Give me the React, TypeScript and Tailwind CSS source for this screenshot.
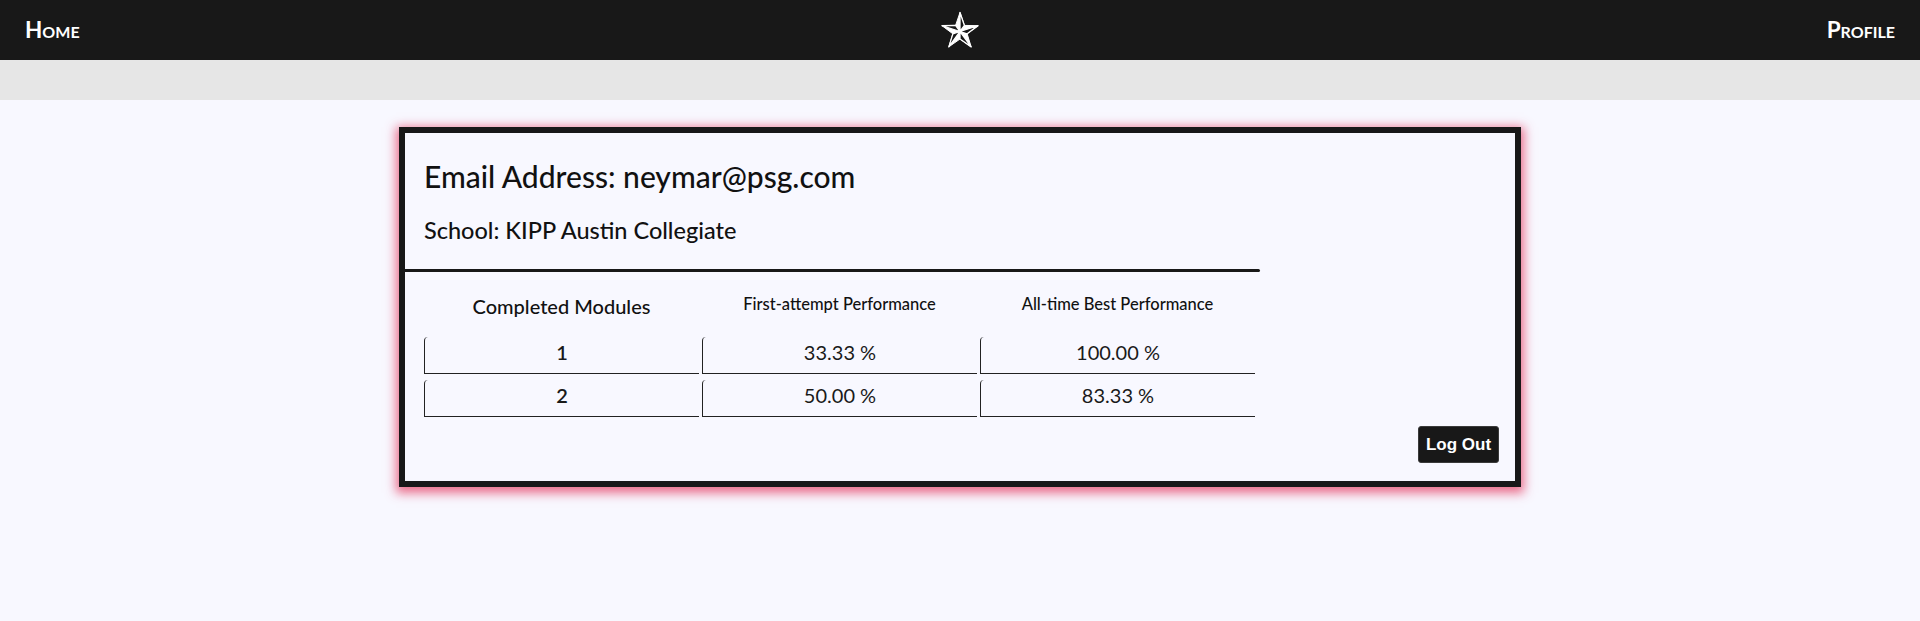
import React from "react";

const C = { x: 20, y: 20.5 };
const R = 19;
const r = 7.5;
function pt(rad: number, deg: number): [number, number] {
  const a = (deg * Math.PI) / 180;
  return [C.x + rad * Math.cos(a), C.y + rad * Math.sin(a)];
}

function NauticalStar() {
  const outer = [0, 1, 2, 3, 4].map((i) => pt(R, -90 + i * 72));
  const inner = [0, 1, 2, 3, 4].map((i) => pt(r, -54 + i * 72));
  const starPts: string[] = [];
  for (let i = 0; i < 5; i++) {
    starPts.push(outer[i].join(","));
    starPts.push(inner[i].join(","));
  }
  return (
    <svg width="40" height="40" viewBox="0 0 40 40">
      <polygon points={starPts.join(" ")} fill="#ffffff" stroke="#ffffff" strokeWidth="1" strokeLinejoin="round" />
      {[0, 1, 2, 3, 4].map((i) => {
        const o = outer[i];
        const n = inner[i];
        return (
          <polygon
            key={i}
            points={`${C.x},${C.y} ${o[0]},${o[1]} ${n[0]},${n[1]}`}
            fill="#181818"
            stroke="#ffffff"
            strokeWidth="1.3"
            strokeLinejoin="round"
          />
        );
      })}
    </svg>
  );
}

const rows = [
  { m: "1", first: "33.33 %", best: "100.00 %" },
  { m: "2", first: "50.00 %", best: "83.33 %" },
];

function Cell({ children, bold }: { children: React.ReactNode; bold?: boolean }) {
  return (
    <div
      className={`w-[275px] h-[37px] border-l border-b border-[#222222] rounded-tl-[4px] flex justify-center pt-[3px] text-[20px] leading-[24px] text-[#1a1a1a] ${
        bold ? "font-semibold" : "font-normal"
      }`}
    >
      {children}
    </div>
  );
}

export default function App() {
  return (
    <div className="min-h-[621px] bg-[#f8f8ff] font-['Lato','Liberation_Sans',sans-serif]">
      <nav className="h-[60px] bg-[#181818] grid grid-cols-3 items-center px-[25px]">
        <div className="text-white text-[22.5px] font-bold leading-none [font-variant:small-caps]">Home</div>
        <div className="flex justify-center pt-[2px]">
          <NauticalStar />
        </div>
        <div className="text-white text-[22.5px] font-bold leading-none [font-variant:small-caps] text-right">Profile</div>
      </nav>
      <div className="h-[40px] bg-[#e6e6e6]" />
      <div className="pt-[27px] flex justify-center">
        <div className="w-[1122px] h-[360px] border-[6px] border-[#181818] bg-[#f8f8ff] shadow-[0_3px_10px_3px_rgba(232,84,118,0.85)] flex flex-col">
          <div className="pl-[19px] pt-[26px] text-[#111111] font-medium">
            <div className="text-[30px] leading-[35px]">Email Address: neymar@psg.com</div>
            <div className="mt-[22px] text-[23.5px] leading-[29px]">School: KIPP Austin Collegiate</div>
          </div>
          <div className="mt-[24px] w-[855px] h-[3px] bg-[#181818] rounded-r-full" />
          <div className="pl-[19px] pt-[22px]">
            <div className="flex gap-[3px] items-center h-[24px] text-[#111111] font-medium">
              <div className="w-[275px] text-center text-[20px] leading-[24px]">Completed Modules</div>
              <div className="w-[275px] text-center text-[16.5px] leading-[19px] pb-[4px]">First-attempt Performance</div>
              <div className="w-[275px] text-center text-[16.5px] leading-[19px] pb-[4px]">All-time Best Performance</div>
            </div>
            <div className="mt-[19px] flex flex-col gap-[6px]">
              {rows.map((row) => (
                <div key={row.m} className="flex gap-[3px]">
                  <Cell bold>{row.m}</Cell>
                  <Cell>{row.first}</Cell>
                  <Cell>{row.best}</Cell>
                </div>
              ))}
            </div>
          </div>
          <div className="flex justify-end pr-[16px] mt-[9px]">
            <button className="h-[37px] w-[81px] bg-[#181818] border border-[#3a3a3a] rounded-[3px] text-white font-bold text-[17px] font-['Liberation_Sans',Arial,sans-serif]">
              Log Out
            </button>
          </div>
        </div>
      </div>
    </div>
  );
}
